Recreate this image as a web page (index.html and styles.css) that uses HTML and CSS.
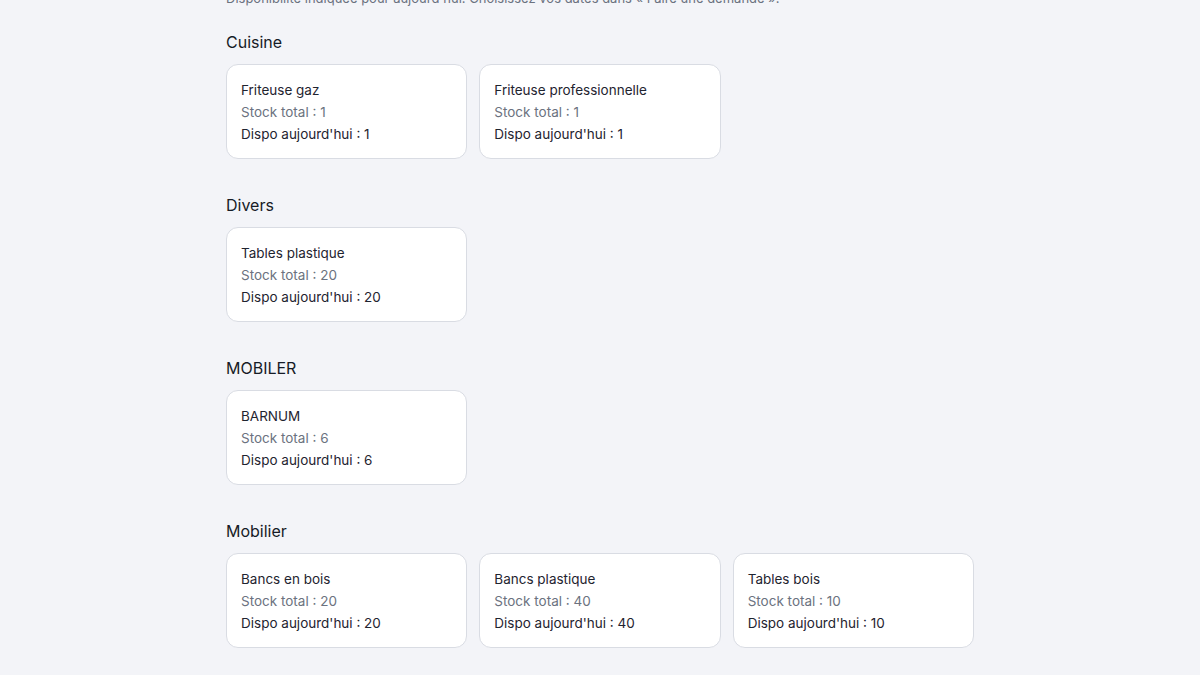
FILE: index.html
```html
<!DOCTYPE html>
<html lang="fr">
<head>
    <meta charset="UTF-8">
    <meta name="viewport" content="width=device-width, initial-scale=1.0">
    <title>Matériel disponible</title>
    <link rel="stylesheet" href="styles.css">
</head>
<body>
    <main class="page">
        <p class="intro">Disponibilité indiquée pour aujourd'hui. Choisissez vos dates dans « Faire une demande ».</p>

        <!-- Cuisine -->
        <section class="category">
            <h2>Cuisine</h2>
            <div class="item-grid">
                <div class="item-card">
                    <div class="item-name">Friteuse gaz</div>
                    <div class="item-stock">Stock total : 1</div>
                    <div class="item-dispo">Dispo aujourd'hui : 1</div>
                </div>
                <div class="item-card">
                    <div class="item-name">Friteuse professionnelle</div>
                    <div class="item-stock">Stock total : 1</div>
                    <div class="item-dispo">Dispo aujourd'hui : 1</div>
                </div>
            </div>
        </section>

        <!-- Divers -->
        <section class="category">
            <h2>Divers</h2>
            <div class="item-grid">
                <div class="item-card">
                    <div class="item-name">Tables plastique</div>
                    <div class="item-stock">Stock total : 20</div>
                    <div class="item-dispo">Dispo aujourd'hui : 20</div>
                </div>
            </div>
        </section>

        <!-- MOBILER -->
        <section class="category">
            <h2>MOBILER</h2>
            <div class="item-grid">
                <div class="item-card">
                    <div class="item-name">BARNUM</div>
                    <div class="item-stock">Stock total : 6</div>
                    <div class="item-dispo">Dispo aujourd'hui : 6</div>
                </div>
            </div>
        </section>

        <!-- Mobilier -->
        <section class="category">
            <h2>Mobilier</h2>
            <div class="item-grid">
                <div class="item-card">
                    <div class="item-name">Bancs en bois</div>
                    <div class="item-stock">Stock total : 20</div>
                    <div class="item-dispo">Dispo aujourd'hui : 20</div>
                </div>
                <div class="item-card">
                    <div class="item-name">Bancs plastique</div>
                    <div class="item-stock">Stock total : 40</div>
                    <div class="item-dispo">Dispo aujourd'hui : 40</div>
                </div>
                <div class="item-card">
                    <div class="item-name">Tables bois</div>
                    <div class="item-stock">Stock total : 10</div>
                    <div class="item-dispo">Dispo aujourd'hui : 10</div>
                </div>
            </div>
        </section>
    </main>
</body>
</html>
```

FILE: styles.css
```css
:root {
    --bg-color: #f3f4f8;
    --card-bg: #ffffff;
    --border-color: #d9dce3;
    --text-color: #1f2430;
    --muted-color: #6b7280;
}

* { box-sizing: border-box; margin: 0; padding: 0; }

body {
    font-family: Inter, "Noto Sans", sans-serif;
    background-color: var(--bg-color);
    color: var(--text-color);
    font-size: 13.5px;
    line-height: 22px;
}

.page {
    max-width: 748px;
    margin: 0 auto;
}

.intro {
    color: var(--muted-color);
    font-size: 13px;
    margin-top: -12px;
    line-height: 20px;
}

.category { margin-top: 22px; }
.category + .category { margin-top: 34px; }

.category h2 {
    font-size: 16px;
    font-weight: 400;
    line-height: 24px;
    margin-bottom: 10px;
    color: #161b26;
}

.item-grid {
    display: grid;
    grid-template-columns: repeat(3, 1fr);
    gap: 12px;
}

.item-card {
    background-color: var(--card-bg);
    border: 1px solid var(--border-color);
    border-radius: 12px;
    padding: 14px 14px 15px;
    height: 95px;
}

.item-stock { color: var(--muted-color); }
```
